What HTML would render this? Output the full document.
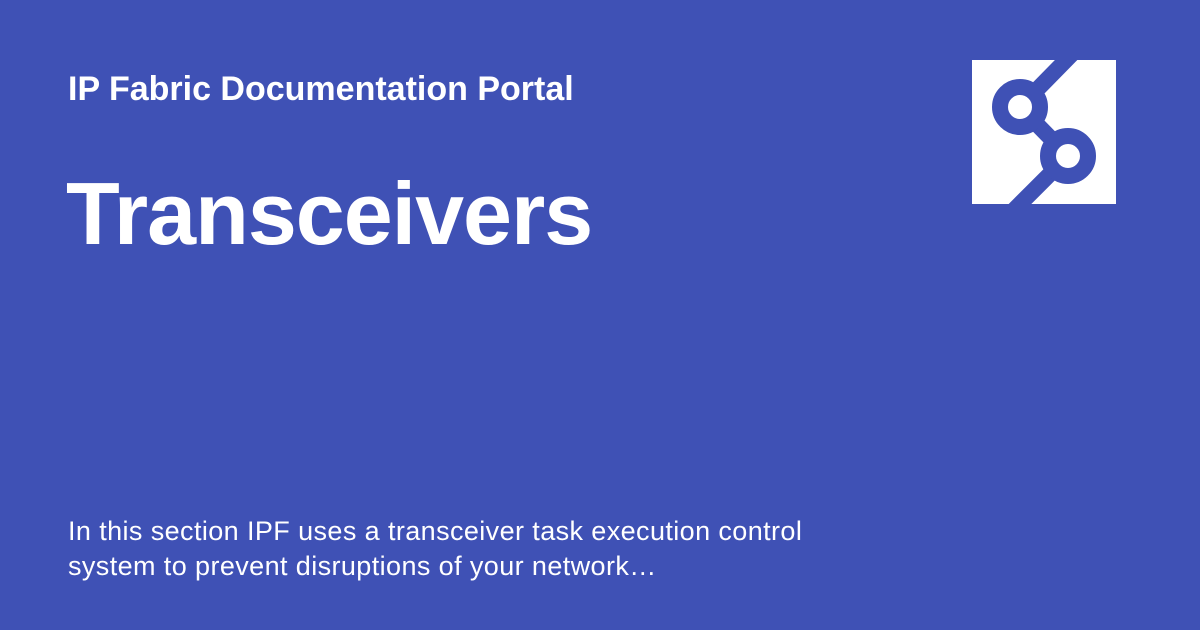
<!DOCTYPE html>
<html><head><style>
body{margin:0;width:1200px;height:630px;background:#3f51b5;font-family:"Liberation Sans",Roboto,sans-serif;color:#fff;position:relative;overflow:hidden}
.t1{position:absolute;left:68px;top:70px;font-size:34px;font-weight:bold}
.t2{position:absolute;left:66px;top:163px;font-size:88px;font-weight:bold;letter-spacing:-1px}
.t3{position:absolute;left:68px;top:514px;font-size:27px;line-height:35px;letter-spacing:0.4px}
svg{position:absolute;left:972px;top:60px}
</style></head><body>
<div class="t1">IP Fabric Documentation Portal</div>
<div class="t2">Transceivers</div>
<div class="t3">In this section IPF uses a transceiver task execution control<br>system to prevent disruptions of your network…</div>
<svg width="144" height="144" viewBox="0 0 144 144">
<rect width="144" height="144" fill="#fff"/>
<g stroke="#3f51b5" stroke-width="16" fill="none">
<line x1="100" y1="-6" x2="48" y2="47"/>
<line x1="48" y1="47" x2="96" y2="96"/>
<line x1="96" y1="96" x2="42" y2="150"/>
<circle cx="48" cy="47" r="20" fill="#fff" stroke-width="16"/>
<circle cx="96" cy="96" r="20" fill="#fff" stroke-width="16"/>
</g>
</svg>
</body></html>
